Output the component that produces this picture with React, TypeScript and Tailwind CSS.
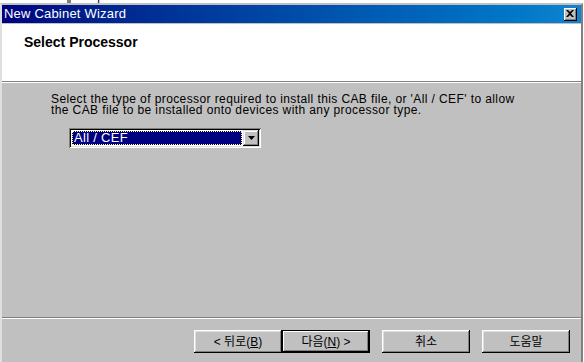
import React from "react";

const btnBase =
  "h-[23px] w-[88px] flex items-center justify-center bg-[#c0c0c0] text-[12px] text-black font-['Liberation_Sans','Noto_Sans_CJK_KR',sans-serif]";
const btnShadow =
  "shadow-[inset_-1px_-1px_0_#000,inset_1px_1px_0_#fff,inset_-2px_-2px_0_#808080,inset_2px_2px_0_#dfdfdf]";
const btnDefault =
  "shadow-[inset_0_0_0_1px_#000,inset_-2px_-2px_0_#000,inset_2px_2px_0_#fff,inset_-3px_-3px_0_#808080]";

export default function App() {
  return (
    <div className="w-[584px] h-[362px] bg-white overflow-hidden flex flex-col font-['Liberation_Sans',sans-serif]">
      {/* background strip */}
      <div className="h-[3px] overflow-hidden relative shrink-0">
        <div className="flex items-end -mt-[10px] h-[13px] text-[12px] text-black leading-[13px]">
          <div className="ml-[67px] w-[4px] h-[13px] bg-[#808080]" />
          <span className="ml-[1px]">Compression</span>
          <span className="ml-[67px]">False</span>
        </div>
      </div>
      {/* window */}
      <div className="w-[583px] flex-1 flex flex-col border-t-[2px] border-t-[#c0c0c0] border-l-[2px] border-l-[#dfdfdf] border-r-[2px] border-r-[#808080] bg-[#c0c0c0]">
        {/* title bar */}
        <div className="h-[18px] shrink-0 flex items-center justify-between bg-gradient-to-r from-[#000080] to-[#1084d0] pl-[2px] pr-[4px]">
          <span className="text-white text-[13px] leading-[18px] tracking-[0.2px] font-['Liberation_Sans',sans-serif]">
            New Cabinet Wizard
          </span>
          <div className="w-[13px] h-[13px] bg-[#c0c0c0] flex items-center justify-center shadow-[inset_-1px_-1px_0_#000,inset_1px_1px_0_#fff,inset_-2px_-2px_0_#808080]">
            <svg width="8" height="7" viewBox="0 0 8 7" className="-mt-[1px] -ml-[1px]">
              <path d="M0 0h2l2 2 2-2h2L5 3.5 8 7H6L4 5 2 7H0l3-3.5z" fill="#000" />
            </svg>
          </div>
        </div>
        <div className="h-px shrink-0 bg-[#c0c0c0]" />
        {/* header */}
        <div className="h-[57px] shrink-0 bg-white pl-[22px] pt-[6px]">
          <span className="text-[14px] font-bold text-black leading-[16px]">Select Processor</span>
        </div>
        <div className="h-px shrink-0 bg-[#808080]" />
        <div className="h-px shrink-0 bg-white" />
        {/* body */}
        <div className="flex-1 flex flex-col">
          <div className="pl-[49px] pt-[11px] text-[12px] leading-[11px] tracking-[0.4px] text-black">
            <p>Select the type of processor required to install this CAB file, or 'All / CEF' to allow</p>
            <p>the CAB file to be installed onto devices with any processor type.</p>
          </div>
          <div className="ml-[67px] mt-[12px] w-[192px] h-[20px] flex shadow-[inset_1px_1px_0_#808080,inset_-1px_-1px_0_#fff,inset_2px_2px_0_#000,inset_-2px_-2px_0_#dfdfdf] bg-white p-[2px]">
            <div className="flex-1 flex p-px">
              <div className="flex-1 bg-[#000080] border border-dotted border-[#ffff80] text-white text-[13px] leading-[12px] pl-[1px] tracking-[0.3px]">
                All / CEF
              </div>
            </div>
            <div className="w-[16px] h-[16px] bg-[#c0c0c0] flex items-center justify-center shadow-[inset_-1px_-1px_0_#000,inset_1px_1px_0_#dfdfdf,inset_-2px_-2px_0_#808080,inset_2px_2px_0_#fff]">
              <svg width="7" height="4" viewBox="0 0 7 4">
                <path d="M0 0h7L3.5 4z" fill="#000" />
              </svg>
            </div>
          </div>
          <div className="flex-1" />
          <div className="h-px bg-[#808080]" />
          <div className="h-px bg-white" />
          <div className="flex pt-[11px] pl-[192px] h-[43px]">
            <div className={btnBase + " " + btnShadow}>
              &lt; 뒤로(<span className="underline">B</span>)
            </div>
            <div className={btnBase + " " + btnDefault}>
              다음(<span className="underline">N</span>) &gt;
            </div>
            <div className={btnBase + " " + btnShadow + " ml-[12px]"}>취소</div>
            <div className={btnBase + " " + btnShadow + " ml-[12px]"}>도움말</div>
          </div>
        </div>
      </div>
    </div>
  );
}
